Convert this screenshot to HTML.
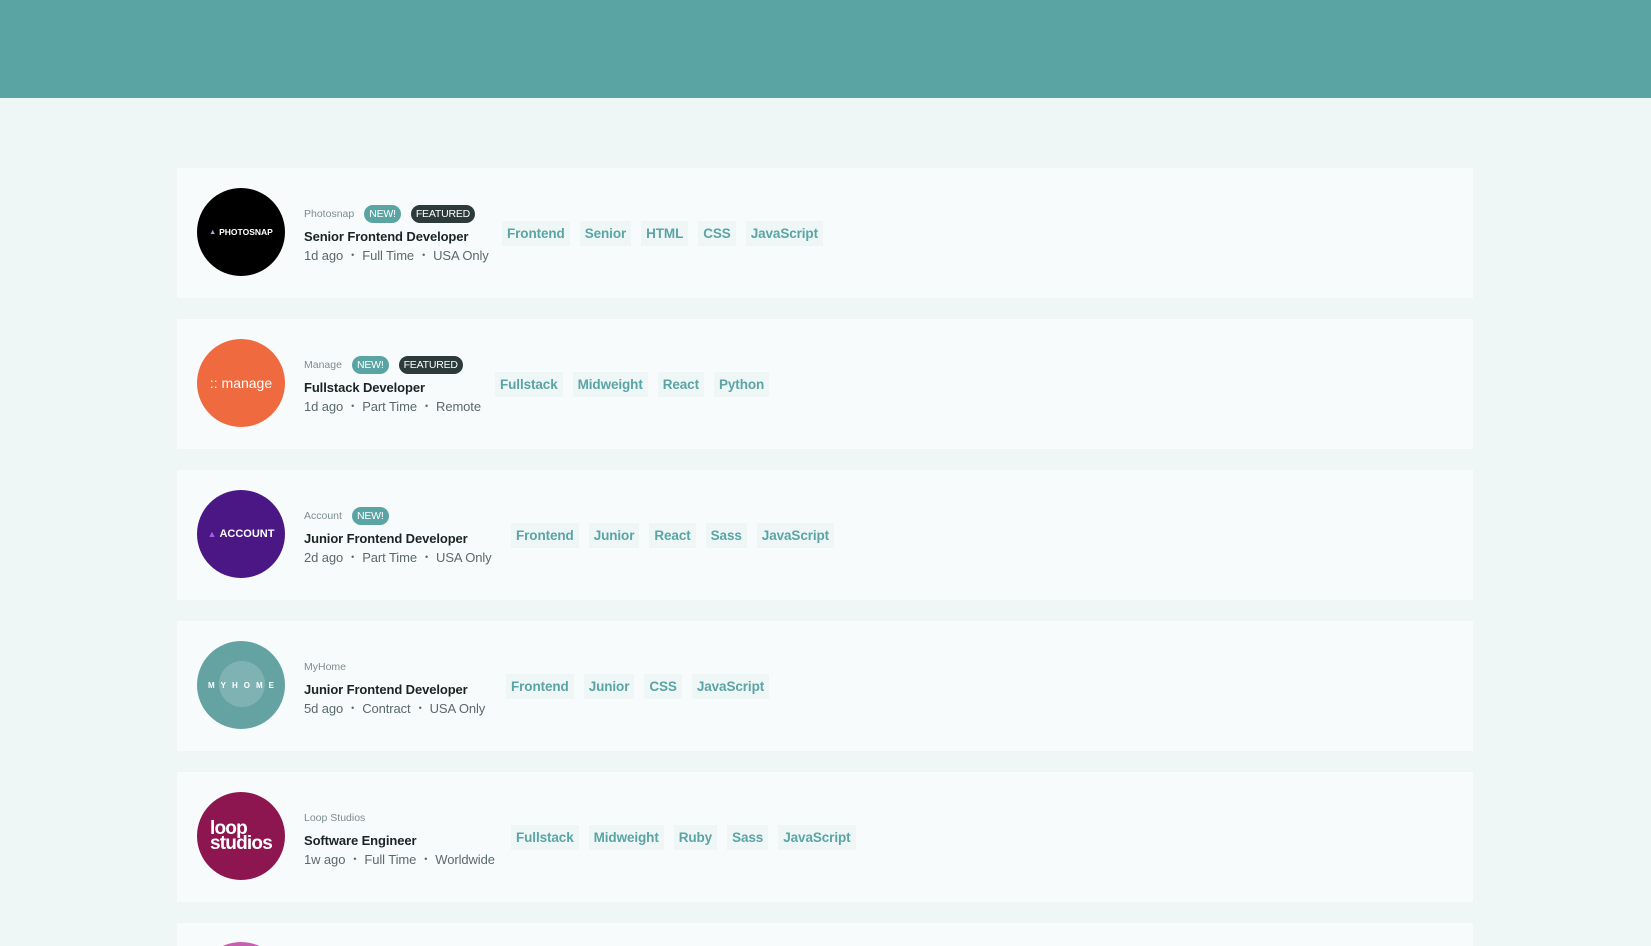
<!DOCTYPE html>
<html><head><meta charset="utf-8"><style>
*{margin:0;padding:0;box-sizing:border-box}
html,body{width:1651px;height:946px;overflow:hidden}
body{background:#eff6f6;font-family:"Liberation Sans",sans-serif;position:relative}
.hdr{position:absolute;left:0;top:0;width:1651px;height:98px;background:#5ba4a4}
.card{position:absolute;left:177px;width:1296px;height:130px;background:#f8fbfb;overflow:hidden}
.logo{position:absolute;left:20px;top:20px;width:88px;height:88px;border-radius:50%;display:flex;align-items:center;justify-content:center;color:#fff;font-weight:bold;overflow:hidden}
.info{position:absolute;left:127px;top:36px}
.co{font-size:10.5px;color:#7b8e8e;height:20px;display:flex;align-items:center;gap:10px}
.b{font-size:10.5px;color:#fff;border-radius:10px;padding:3px 5px;font-weight:normal;letter-spacing:-0.2px}
.new{background:#5ba4a4}.feat{background:#2c3a3a}
.ti{font-size:13px;font-weight:bold;color:#1a2424;margin-top:5px;letter-spacing:-0.1px}
.me{font-size:13px;color:#5a6a6a;margin-top:4px;letter-spacing:-0.1px}
.me span{margin:0 8px;font-size:9px;vertical-align:2px}
.tags{position:absolute;top:53px;display:flex;gap:10px}
.tags div{background:#eef6f6;color:#5ba4a4;font-weight:bold;font-size:13.5px;height:25px;line-height:25px;padding:0 5px;letter-spacing:-0.1px}
</style></head><body>
<div class="hdr"></div>

<div class="card" style="top:168px">
<div class="logo" style="background:#000;font-size:8.5px"><span style="font-size:7px;color:#b9a0e0;margin-right:3px">▲</span>PHOTOSNAP</div>
<div class="info"><div class="co">Photosnap <span class="b new">NEW!</span><span class="b feat">FEATURED</span></div>
<div class="ti">Senior Frontend Developer</div><div class="me">1d ago<span>•</span>Full Time<span>•</span>USA Only</div></div>
<div class="tags" style="left:325px"><div>Frontend</div><div>Senior</div><div>HTML</div><div>CSS</div><div>JavaScript</div></div>
</div>

<div class="card" style="top:319px">
<div class="logo" style="background:#ef6a3f;font-size:14px;font-weight:normal">:: manage</div>
<div class="info"><div class="co">Manage <span class="b new">NEW!</span><span class="b feat">FEATURED</span></div>
<div class="ti">Fullstack Developer</div><div class="me">1d ago<span>•</span>Part Time<span>•</span>Remote</div></div>
<div class="tags" style="left:318px"><div>Fullstack</div><div>Midweight</div><div>React</div><div>Python</div></div>
</div>

<div class="card" style="top:470px">
<div class="logo" style="background:#4b1784;font-size:11px"><span style="color:#a35ee0;font-size:9px;margin-right:3px">▲</span>ACCOUNT</div>
<div class="info"><div class="co">Account <span class="b new">NEW!</span></div>
<div class="ti">Junior Frontend Developer</div><div class="me">2d ago<span>•</span>Part Time<span>•</span>USA Only</div></div>
<div class="tags" style="left:334px"><div>Frontend</div><div>Junior</div><div>React</div><div>Sass</div><div>JavaScript</div></div>
</div>

<div class="card" style="top:621px">
<div class="logo" style="background:#65a3a3;font-size:8px;letter-spacing:6px"><div style="position:absolute;left:22px;top:20px;width:46px;height:46px;border-radius:50%;background:#7fb3b3"></div><span style="position:relative;margin-left:6px">MYHOME</span></div>
<div class="info"><div class="co">MyHome</div>
<div class="ti">Junior Frontend Developer</div><div class="me">5d ago<span>•</span>Contract<span>•</span>USA Only</div></div>
<div class="tags" style="left:329px"><div>Frontend</div><div>Junior</div><div>CSS</div><div>JavaScript</div></div>
</div>

<div class="card" style="top:772px">
<div class="logo" style="background:#8d1650;font-size:19px;line-height:15px;font-weight:bold;letter-spacing:-0.8px;text-align:left"><div>loop<br>studios</div></div>
<div class="info"><div class="co">Loop Studios</div>
<div class="ti">Software Engineer</div><div class="me">1w ago<span>•</span>Full Time<span>•</span>Worldwide</div></div>
<div class="tags" style="left:334px"><div>Fullstack</div><div>Midweight</div><div>Ruby</div><div>Sass</div><div>JavaScript</div></div>
</div>

<div class="card" style="top:923px;height:23px">
<div style="position:absolute;left:20px;top:19px;width:88px;height:4px;overflow:hidden"><div style="width:88px;height:88px;border-radius:50%;background:#c65fb0"></div></div>
</div>
</body></html>
